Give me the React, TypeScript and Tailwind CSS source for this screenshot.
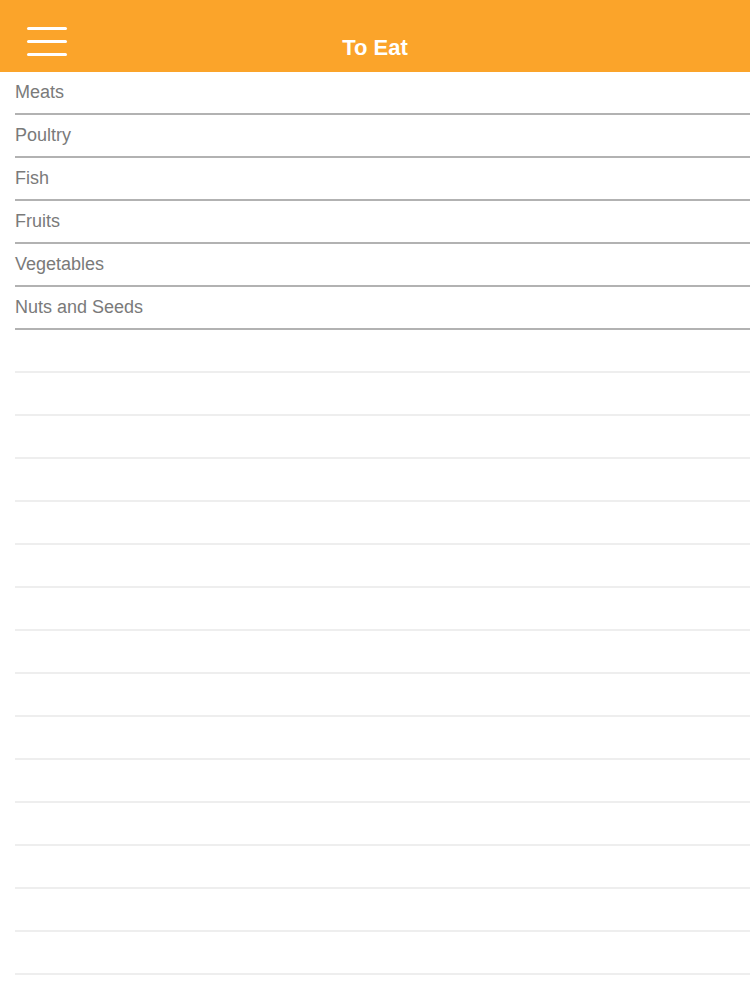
import React from 'react';

const categories = ['Meats', 'Poultry', 'Fish', 'Fruits', 'Vegetables', 'Nuts and Seeds'];

const App: React.FC = () => {
    return (
        <div className="w-[750px] h-[1000px] overflow-hidden bg-white" style={{ fontFamily: '"Liberation Sans", Arial, sans-serif' }}>
            {/* 헤더 */}
            <div className="relative h-[72px] bg-[#fba42a] flex items-start justify-center">
                <button className="absolute left-[27px] top-[27px] flex flex-col gap-[10px]">
                    <span className="block w-[40px] h-[3px] bg-white rounded-sm" />
                    <span className="block w-[40px] h-[3px] bg-white rounded-sm" />
                    <span className="block w-[40px] h-[3px] bg-white rounded-sm" />
                </button>
                <h1 className="text-white text-[22px] font-semibold mt-[37px] leading-none">To Eat</h1>
            </div>

            {/* 목록 */}
            <div>
                {categories.map((name) => (
                    <div key={name} className="ml-[15px] h-[43px] border-b-[2px] border-[#b2b2b2] flex items-center">
                        <span className="text-[18px] text-[#7a7a7a] -mt-[1px]">{name}</span>
                    </div>
                ))}
                {[...Array(16)].map((_, i) => (
                    <div key={i} className="ml-[15px] h-[43px] border-b-[2px] border-[#eeeeee]" />
                ))}
            </div>
        </div>
    );
};

export default App;
